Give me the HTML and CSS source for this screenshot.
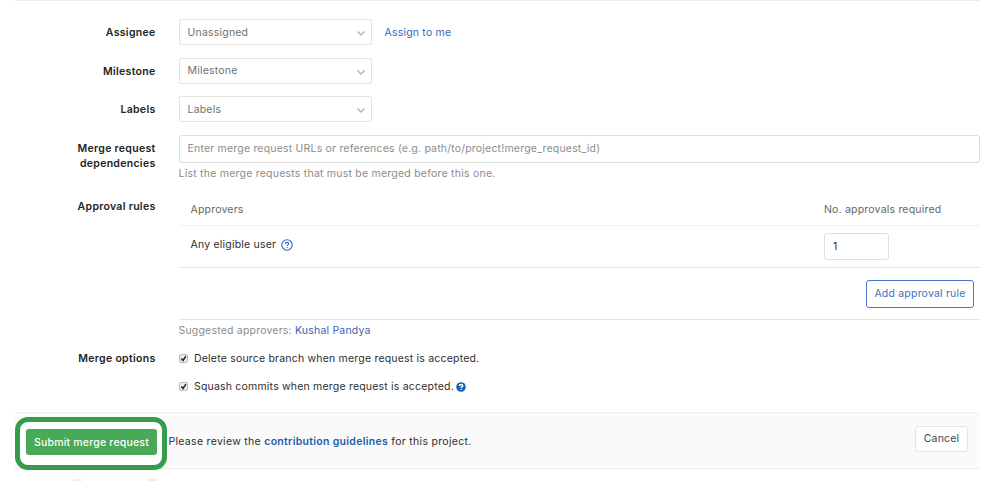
FILE: index.html
```html
<!DOCTYPE html>
<html lang="en">
<head>
  <meta charset="UTF-8" />
  <meta name="viewport" content="width=device-width, initial-scale=1.0"/>
  <title>New Merge Request</title>
  <link rel="stylesheet" href="styles.css">
</head>
<body>

  <form class="mr-form">
    <div class="form-row">
      <label class="form-label">Assignee</label>
      <div class="form-field inline">
        <button type="button" class="dropdown"><span>Unassigned</span>
          <svg class="chevron" viewBox="0 0 10 7"><path d="M1.500 1.500l3.500 3.500 3.500-3.500"/></svg>
        </button>
        <a href="#" class="assign-link">Assign to me</a>
      </div>
    </div>
    <div class="form-row">
      <label class="form-label">Milestone</label>
      <div class="form-field">
        <button type="button" class="dropdown"><span>Milestone</span>
          <svg class="chevron" viewBox="0 0 10 7"><path d="M1.500 1.500l3.500 3.500 3.500-3.500"/></svg>
        </button>
      </div>
    </div>
    <div class="form-row">
      <label class="form-label">Labels</label>
      <div class="form-field">
        <button type="button" class="dropdown"><span>Labels</span>
          <svg class="chevron" viewBox="0 0 10 7"><path d="M1.500 1.500l3.500 3.500 3.500-3.500"/></svg>
        </button>
      </div>
    </div>

    <div class="form-row dependencies">
      <label class="form-label">Merge request dependencies</label>
      <div class="form-field">
        <input type="text" class="text-input" placeholder="Enter merge request URLs or references (e.g. path/to/project!merge_request_id)">
        <div class="help-text">List the merge requests that must be merged before this one.</div>
      </div>
    </div>

    <div class="form-row approvals">
      <label class="form-label">Approval rules</label>
      <div class="form-field">
        <div class="rules">
          <div class="rules-row rules-head">
            <span>Approvers</span>
            <span>No. approvals required</span>
          </div>
          <div class="rules-row rules-body">
            <span class="rule-name">Any eligible user
              <svg class="help-icon" viewBox="0 0 12 12"><circle cx="6" cy="6" r="5.2"/><path d="M4.400 4.900c0-2.100 3.300-2 3.300-.1 0 1.100-1.600 1.100-1.600 2.200M6.100 8.100v.9"/></svg>
            </span>
            <input type="text" class="count-input" value="1">
          </div>
          <div class="rules-footer">
            <button type="button" class="btn btn-add">Add approval rule</button>
          </div>
        </div>
        <div class="suggested">Suggested approvers: <a href="#">Kushal Pandya</a></div>
      </div>
    </div>

    <div class="form-row options">
      <label class="form-label">Merge options</label>
      <div class="form-field">
        <div class="check-row">
          <svg class="check" viewBox="0 0 9 9"><rect x=".5" y=".5" width="8" height="8" rx="1.5"/><path d="M2.300 4.600l1.700 1.900 2.900-4.400"/></svg>
          <span>Delete source branch when merge request is accepted.</span>
        </div>
        <div class="check-row">
          <svg class="check" viewBox="0 0 9 9"><rect x=".5" y=".5" width="8" height="8" rx="1.5"/><path d="M2.300 4.600l1.700 1.900 2.900-4.400"/></svg>
          <span>Squash commits when merge request is accepted.</span>
          <svg class="help-icon solid" viewBox="0 0 10 10"><circle cx="5" cy="5" r="4.8"/><path d="M3.400 4c0-2 3.300-1.900 3.300-.1C6.700 5 5.100 4.900 5.100 6M5.100 6.900v1.100"/></svg>
        </div>
      </div>
    </div>

    <div class="form-actions">
      <div class="submit-highlight">
        <button type="button" class="btn btn-submit">Submit merge request</button>
      </div>
      <span class="review-text">Please review the <a href="#">contribution guidelines</a> for this project.</span>
      <button type="button" class="btn btn-cancel">Cancel</button>
    </div>
  </form>

  <div class="next-section">
    <span class="tab-top"></span>
    <span class="tab-top"></span>
  </div>

</body>
</html>
```

FILE: styles.css
```css
* {
  box-sizing: border-box;
}

body {
  margin: 0;
  height: 483px;
  overflow: hidden;
  background: #fff;
  color: #2e2e2e;
  font-family: Inter, "Liberation Sans", sans-serif;
  font-size: 10.5px;
  line-height: 16px;
  letter-spacing: 0.2px;
}

a {
  color: #3466b8;
  text-decoration: none;
}

button,
input {
  font: inherit;
  letter-spacing: inherit;
  margin: 0;
}

.mr-form {
  margin: 0 23px 0 15px;
  padding-top: 18px;
  border-top: 1px solid #ececec;
}

.form-row {
  display: grid;
  grid-template-columns: 140.5px 1fr;
  column-gap: 23px;
  height: 38.5px;
}

.form-label {
  padding-top: 6px;
  text-align: right;
  font-weight: 600;
  letter-spacing: 0.3px;
  color: #222;
}

.form-field.inline {
  display: flex;
  gap: 13px;
}

.assign-link {
  padding-top: 5.5px;
}

.dropdown {
  display: flex;
  align-items: center;
  justify-content: space-between;
  width: 193px;
  height: 26px;
  padding: 1px 5px 0 8px;
  background: #fff;
  border: 1px solid #e3e3e3;
  border-radius: 2px;
  color: #707070;
}

.chevron {
  width: 10px;
  height: 7px;
  margin-top: 2px;
  fill: none;
  stroke: #b4b4b4;
  stroke-width: 1.5;
}

.dependencies {
  height: 60px;
}

.dependencies .form-label {
  line-height: 15.5px;
}

.text-input {
  display: block;
  width: 100%;
  height: 28px;
  padding: 0 8px;
  border: 1px solid #dcdcdc;
  border-radius: 3px;
}

.text-input::placeholder {
  color: #8c8c8c;
}

.help-text {
  margin-top: 3px;
  letter-spacing: 0.23px;
  color: #8c8c8c;
}

.approvals {
  height: 155.5px;
}

.approvals .form-label {
  padding-top: 4px;
}

.rules-row {
  display: grid;
  grid-template-columns: 1fr 156px;
  padding-left: 12px;
}

.rules-head {
  height: 31px;
  align-items: center;
  border-bottom: 1px solid #f0f0f0;
  color: #666;
}

.rules-body {
  height: 42px;
  padding-top: 7.5px;
  border-bottom: 1px solid #e3e3e3;
}

.rule-name {
  display: flex;
  align-items: center;
  gap: 5px;
  height: 23px;
}

.help-icon {
  width: 12px;
  height: 12px;
  fill: none;
  stroke: #3466b8;
  stroke-width: 1.1;
}

.help-icon.solid {
  width: 10px;
  height: 10px;
  margin-left: -4px;
}

.solid circle {
  fill: #1b5fb4;
  stroke: none;
}

.solid path {
  stroke: #fff;
  stroke-width: 1.4;
}

.count-input {
  width: 65px;
  height: 27px;
  padding: 0 8px;
  border: 1px solid #dfdfdf;
  border-radius: 3px;
  color: #2e2e2e;
}

.rules-footer {
  display: flex;
  justify-content: flex-end;
  height: 52px;
  padding: 12px 6px 0 0;
  border-bottom: 1px solid #e3e3e3;
}

.btn {
  padding: 0;
  border-radius: 3px;
  text-align: center;
  white-space: nowrap;
}

.btn-add {
  width: 108px;
  height: 28px;
  background: #fff;
  border: 1px solid #4a7bc8;
  color: #3f72c4;
}

.suggested {
  margin-top: 3px;
  color: #8c8c8c;
}

.options {
  height: 62px;
  padding-top: 0.5px;
}

.options .form-label {
  padding-top: 0;
}

.check-row {
  display: flex;
  align-items: center;
  gap: 6.5px;
  height: 16px;
  margin-bottom: 12px;
}

.check {
  width: 9px;
  height: 9px;
}

.check rect {
  fill: #eee;
  stroke: #bbb;
}

.check path {
  fill: none;
  stroke: #222;
  stroke-width: 1.5;
}

.form-actions {
  display: flex;
  align-items: flex-start;
  height: 57px;
  background: #fafafa;
  border-top: 1px solid #f0f0f0;
  border-bottom: 1px solid #ececec;
}

.submit-highlight {
  width: 152px;
  height: 53px;
  margin-top: 4px;
  padding: 7px 0 0 6px;
  background: #fff;
  border: 5px solid #369c4c;
  border-radius: 13px;
}

.btn-submit {
  display: block;
  width: 131px;
  height: 26px;
  padding-top: 1px;
  background: #48a956;
  border: 0;
  color: #fff;
  font-weight: 500;
}

.review-text {
  margin: 21px 0 0 1.5px;
  letter-spacing: 0.3px;
}

.review-text a {
  color: #1b5cae;
  font-weight: 600;
}

.btn-cancel {
  width: 53px;
  height: 26px;
  margin: 13px 12px 0 auto;
  background: #fff;
  border: 1px solid #e3e3e3;
  color: #444;
}

.next-section {
  display: flex;
  gap: 66px;
  margin-top: 10px;
  padding-left: 73px;
}

.tab-top {
  width: 9px;
  height: 2px;
  border-radius: 4px 4px 0 0;
  background: #ededed;
}
```
